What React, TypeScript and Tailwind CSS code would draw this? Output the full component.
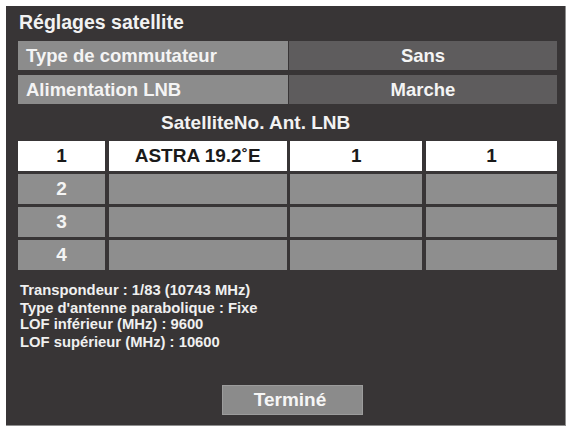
import React from "react";

const font = { fontFamily: '"Liberation Sans", Arial, sans-serif' };

export default function App() {
  const rows = [
    { n: "1", sat: "ASTRA 19.2˚E", no: "1", lnb: "1", active: true },
    { n: "2", sat: "", no: "", lnb: "", active: false },
    { n: "3", sat: "", no: "", lnb: "", active: false },
    { n: "4", sat: "", no: "", lnb: "", active: false },
  ];
  return (
    <div className="w-[573px] h-[429px] bg-white pt-[6px] pl-[6px]" style={font}>
      <div className="w-[560px] h-[420px] bg-[#383536] border-r border-b border-[#8f8f8f] pl-[12px] pt-[5px] flex flex-col">
        <div className="text-[19.5px] leading-[22px] font-bold text-[#f2f2f2] pl-[1px] h-[30px]">
          Réglages satellite
        </div>
        <div className="flex flex-col gap-[5px] w-[539px]">
          <div className="grid grid-cols-[270px_1fr] gap-[1px] h-[29px]">
            <div className="bg-[#8c8c8c] text-[18.5px] leading-[29px] font-bold text-[#f4f4f4] pl-[8px]">
              Type de commutateur
            </div>
            <div className="bg-[#5e5c5d] text-[18.5px] leading-[29px] font-bold text-[#f4f4f4] text-center">
              Sans
            </div>
          </div>
          <div className="grid grid-cols-[270px_1fr] gap-[1px] h-[29px]">
            <div className="bg-[#8c8c8c] text-[18.5px] leading-[29px] font-bold text-[#f4f4f4] pl-[8px]">
              Alimentation LNB
            </div>
            <div className="bg-[#5e5c5d] text-[18.5px] leading-[29px] font-bold text-[#f4f4f4] text-center">
              Marche
            </div>
          </div>
        </div>
        <div className="h-[37px] text-[19px] leading-[37px] font-bold text-[#f2f2f2] pl-[143px]">
          SatelliteNo. Ant. LNB
        </div>
        <div className="grid grid-cols-[87px_178px_132px_131px] gap-x-[3.67px] gap-y-[3px] w-[539px]">
          {rows.map((r) => (
            <React.Fragment key={r.n}>
              {[r.n, r.sat, r.no, r.lnb].map((v, i) => (
                <div
                  key={i}
                  className={
                    r.active
                      ? "h-[30px] bg-white text-[#1a1a1a] text-[19px] leading-[30px] font-bold text-center"
                      : "h-[30px] bg-[#8e8e8e] text-[#f4f4f4] text-[19px] leading-[30px] font-bold text-center"
                  }
                >
                  {v}
                </div>
              ))}
            </React.Fragment>
          ))}
        </div>
        <div className="text-[14.8px] leading-[16px] font-bold text-[#f0f0f0] pl-[2px]">
          <div className="mt-[12px]">Transpondeur : 1/83 (10743 MHz)</div>
          <div className="mt-[2px]">Type d'antenne parabolique : Fixe</div>
          <div>LOF inférieur (MHz) : 9600</div>
          <div className="mt-[2px]">LOF supérieur (MHz) : 10600</div>
        </div>
        <div className="mt-[35px] ml-[204px] w-[141px] h-[30px] bg-[#8b8b8b] border border-[#9c9c9c] text-[19px] leading-[28px] font-bold text-[#f6f6f6] text-center pr-[5px]">
          Terminé
        </div>
      </div>
    </div>
  );
}
